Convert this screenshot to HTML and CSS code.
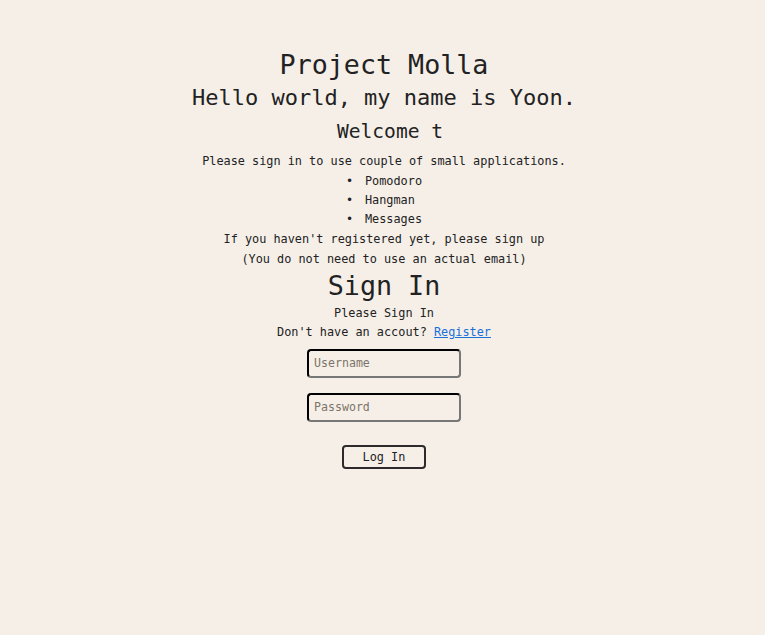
FILE: index.html
```html
<!DOCTYPE html>
<html lang="en">
<head>
<meta charset="utf-8">
<title>Project Molla</title>
<link rel="stylesheet" href="styles.css">
</head>
<body>
<main class="page">
  <h1 class="title">Project Molla</h1>
  <h2 class="hello">Hello world, my name is Yoon.</h2>
  <h3 class="welcome">Welcome t</h3>
  <p class="intro">Please sign in to use couple of small applications.</p>
  <ul class="apps">
    <li>Pomodoro</li>
    <li>Hangman</li>
    <li>Messages</li>
  </ul>
  <p class="note">If you haven't registered yet, please sign up</p>
  <p class="note">(You do not need to use an actual email)</p>
  <h2 class="signin-title">Sign In</h2>
  <p class="small">Please Sign In</p>
  <p class="small">Don't have an accout? <a class="link" href="#">Register</a></p>
  <form class="form">
    <input class="field" type="text" placeholder="Username">
    <input class="field" type="password" placeholder="Password">
    <button class="btn" type="button">Log In</button>
  </form>
</main>
</body>
</html>
```
FILE: styles.css
```css
html, body {
  margin: 0;
  padding: 0;
  background: #f5efe8;
}
body {
  font-family: "DejaVu Sans Mono", monospace;
  color: #222;
  min-height: 635px;
}
.page {
  padding-top: 49px;
  padding-left: 3px;
  text-align: center;
  display: flex;
  flex-direction: column;
  align-items: center;
}
.title {
  margin: 0;
  font-size: 26.7px;
  font-weight: normal;
  line-height: 32px;
}
.hello {
  margin: 0;
  font-size: 22px;
  font-weight: normal;
  line-height: 34px;
}
.welcome {
  margin: 0 0 2.5px;
  padding-left: 12px;
  font-size: 19.6px;
  font-weight: normal;
  line-height: 34px;
}
.intro {
  margin: 0 0 1px;
  font-size: 11.85px;
  line-height: 19px;
}
.apps {
  list-style: none;
  margin: 0;
  padding: 0;
  text-align: left;
  font-size: 11.85px;
  line-height: 19px;
}
.apps li::before {
  content: "•";
  display: inline-block;
  width: 19px;
}
.note {
  margin: 0;
  font-size: 11.85px;
  line-height: 20px;
}
.note:first-of-type {
  margin-top: 0.5px;
}
.signin-title {
  margin: 0 0 1px;
  font-size: 26.7px;
  font-weight: normal;
  line-height: 34px;
}
.small {
  margin: 0;
  font-size: 11.85px;
  line-height: 19px;
}
.link {
  color: #1a6fd8;
}
.form {
  margin-top: 7px;
  display: flex;
  flex-direction: column;
  align-items: center;
}
.field {
  box-sizing: border-box;
  width: 154px;
  height: 29px;
  margin: 0 0 15px;
  padding: 0 5px;
  border: 2px inset #777;
  border-top-color: #1f1f1f;
  border-left-color: #1f1f1f;
  border-radius: 4px;
  background: transparent;
  font-family: "DejaVu Sans Mono", monospace;
  font-size: 11.6px;
  color: #222;
  outline: none;
}
.field::placeholder {
  color: #7d7468;
}
.btn {
  box-sizing: border-box;
  margin-top: 8px;
  width: 84px;
  height: 24px;
  border: 2px solid #2e2a2c;
  border-radius: 4px;
  background: transparent;
  font-family: "DejaVu Sans Mono", monospace;
  font-size: 11.85px;
  color: #222;
  padding: 0;
}
```
